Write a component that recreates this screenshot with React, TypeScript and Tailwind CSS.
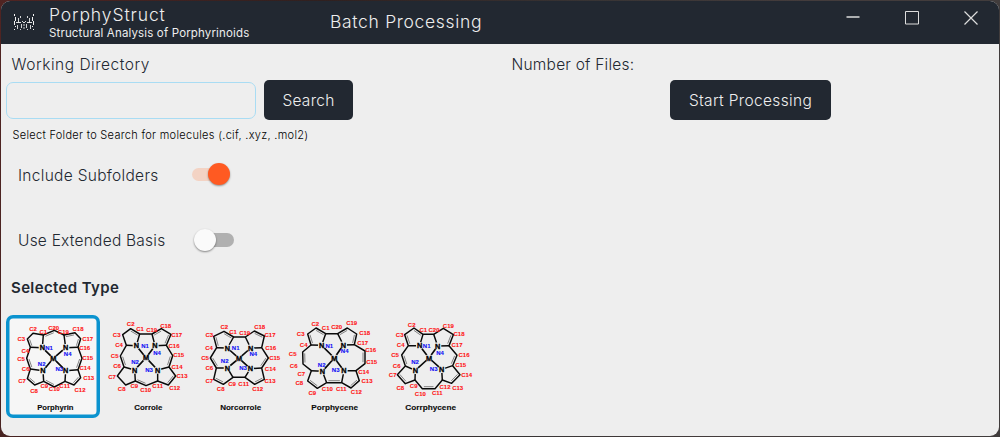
import { useState } from "react";

type Point = [number, number];
// Ring position, atom x, atom y, label x, label y
type Carbon = [number, number, number, number, number];

interface Molecule {
  name: string;
  viewBox: string;
  titleX: number;
  titleWidth: number;
  carbons: Carbon[];
  metal: Point;
  nitrogens: Point[];
  nitrogenLabels: Point[];
  pyrroles: Point[];
  doubles: Point[];
}

const molecules: Molecule[] = [
  {
    name: "Porphyrin",
    viewBox: "18 9 282 306",
    titleX: 166,
    titleWidth: 109,
    carbons: [
      [1, 130, 69, 130, 58], [2, 99, 64, 99, 51], [3, 82, 81, 64, 81], [4, 91, 106, 76, 115],
      [5, 80, 139, 63, 139], [6, 91, 171, 77, 171], [7, 82, 200, 66, 205], [8, 104, 219, 102, 235],
      [9, 131, 208, 133, 220], [10, 163, 225, 163, 231], [11, 195, 208, 194, 220], [12, 222, 219, 240, 232],
      [13, 242, 197, 266, 198], [14, 234, 173, 255, 168], [15, 246, 139, 263, 138], [16, 234, 106, 254, 108],
      [17, 242, 80, 263, 79], [18, 225, 62, 234, 49], [19, 192, 69, 190, 58], [20, 163, 55, 161, 48],
    ],
    metal: [160, 139],
    nitrogens: [[127, 107], [129, 176], [197, 176], [197, 107]],
    nitrogenLabels: [[147, 106], [125, 156], [178, 171], [203, 124]],
    pyrroles: [[1, 4], [6, 9], [11, 14], [16, 19]],
    doubles: [[1, 20], [3, 4], [5, 6], [7, 8], [9, 10], [12, 13], [14, 15], [17, 16], [18, 19]],
  },
  {
    name: "Corrole",
    viewBox: "0 9 282 306",
    titleX: 145,
    titleWidth: 84,
    carbons: [
      [1, 119, 66, 120, 51], [2, 92, 50, 92, 36], [3, 68, 68, 50, 67], [4, 79, 100, 57, 99],
      [5, 61, 132, 44, 132], [6, 72, 165, 51, 162], [7, 52, 192, 36, 195], [8, 77, 219, 65, 231],
      [9, 106, 207, 103, 222], [10, 138, 221, 137, 234], [11, 173, 207, 173, 221], [12, 205, 219, 224, 228],
      [13, 227, 192, 246, 191], [14, 207, 165, 231, 165], [15, 218, 131, 236, 128], [16, 199, 100, 222, 101],
      [17, 213, 67, 230, 69], [18, 184, 50, 197, 40], [19, 156, 66, 155, 52],
    ],
    metal: [138, 137],
    nitrogens: [[109, 101], [104, 174], [173, 174], [165, 101]],
    nitrogenLabels: [[135, 101], [105, 150], [147, 174], [171, 123]],
    pyrroles: [[1, 4], [6, 9], [11, 14], [16, 19]],
    doubles: [[1, 2], [5, 6], [9, 10], [12, 13], [14, 15], [16, 17], [18, 19]],
  },
  {
    name: "Norcorrole",
    viewBox: "12 9 282 306",
    titleX: 152,
    titleWidth: 123,
    carbons: [
      [1, 131, 75, 129, 60], [2, 102, 58, 103, 45], [3, 71, 73, 58, 69], [4, 80, 107, 57, 108],
      [5, 61, 138, 45, 138], [6, 79, 168, 58, 168], [7, 71, 202, 58, 207], [8, 100, 217, 92, 231],
      [9, 129, 196, 126, 215], [11, 165, 196, 161, 215], [12, 194, 217, 203, 231], [13, 223, 202, 240, 207],
      [14, 215, 168, 241, 171], [15, 235, 138, 254, 138], [16, 215, 107, 242, 108], [17, 223, 72, 240, 69],
      [18, 193, 57, 209, 45], [19, 166, 75, 164, 61],
    ],
    metal: [147, 139],
    nitrogens: [[112, 108], [112, 168], [181, 170], [182, 108]],
    nitrogenLabels: [[137, 108], [104, 147], [159, 168], [190, 125]],
    pyrroles: [[1, 4], [6, 9], [11, 14], [16, 19]],
    doubles: [[1, 2], [3, 4], [5, 6], [7, 8], [12, 13], [14, 15], [17, 18]],
  },
  {
    name: "Porphycene",
    viewBox: "9 9 282 306",
    titleX: 149,
    titleWidth: 140,
    carbons: [
      [1, 122, 65, 122, 46], [2, 93, 48, 91, 36], [3, 68, 66, 47, 66], [4, 78, 99, 56, 99],
      [5, 53, 120, 23, 124], [6, 54, 156, 26, 160], [7, 79, 176, 49, 184], [8, 68, 207, 43, 213],
      [9, 97, 229, 82, 243], [10, 125, 212, 127, 230], [11, 170, 212, 169, 229], [12, 198, 228, 214, 240],
      [13, 223, 206, 246, 205], [14, 213, 176, 236, 178], [15, 240, 155, 260, 148], [16, 240, 117, 257, 114],
      [17, 208, 98, 233, 91], [18, 215, 66, 239, 63], [19, 187, 48, 200, 33], [20, 158, 65, 155, 45],
    ],
    metal: [148, 138],
    nitrogens: [[110, 100], [112, 178], [177, 176], [175, 99]],
    nitrogenLabels: [[133, 100], [110, 159], [152, 174], [179, 117]],
    pyrroles: [[1, 4], [7, 10], [11, 14], [17, 20]],
    doubles: [[1, 2], [3, 4], [5, 6], [8, 9], [10, 11], [12, 13], [15, 16], [17, 18], [19, 20]],
  },
  {
    name: "Corrphycene",
    viewBox: "6 9 282 306",
    titleX: 152,
    titleWidth: 152,
    carbons: [
      [1, 129, 67, 130, 52], [2, 102, 48, 95, 37], [3, 74, 68, 59, 67], [4, 85, 101, 62, 99],
      [5, 65, 129, 45, 127], [6, 76, 162, 50, 160], [7, 52, 188, 38, 189], [8, 76, 215, 61, 228],
      [9, 105, 204, 101, 222], [10, 127, 230, 121, 246], [11, 165, 230, 172, 243], [12, 187, 204, 195, 223],
      [13, 215, 214, 233, 228], [14, 240, 188, 260, 189], [15, 218, 161, 242, 159], [16, 231, 130, 252, 127],
      [17, 207, 101, 231, 99], [18, 220, 68, 237, 64], [19, 190, 49, 205, 40], [20, 161, 67, 162, 52],
    ],
    metal: [147, 138],
    nitrogens: [[119, 101], [106, 175], [185, 172], [173, 102]],
    nitrogenLabels: [[140, 101], [105, 150], [161, 171], [180, 122]],
    pyrroles: [[1, 4], [6, 9], [12, 15], [17, 20]],
    doubles: [[1, 2], [3, 4], [5, 6], [7, 8], [10, 11], [13, 14], [16, 15], [17, 18]],
  },
];

// The second stroke of a double bond, shifted towards the enclosing ring.
function innerLine(a: Point, b: Point, toward: Point) {
  const dx = b[0] - a[0];
  const dy = b[1] - a[1];
  const len = Math.hypot(dx, dy);
  let nx = -dy / len;
  let ny = dx / len;
  const mx = (a[0] + b[0]) / 2;
  const my = (a[1] + b[1]) / 2;
  if (nx * (toward[0] - mx) + ny * (toward[1] - my) < 0) {
    nx = -nx;
    ny = -ny;
  }
  const s = 6;
  const t = 0.12;
  return `M${a[0] + dx * t + nx * s} ${a[1] + dy * t + ny * s}L${b[0] - dx * t + nx * s} ${b[1] - dy * t + ny * s}`;
}

function MoleculeDrawing({ molecule, halo }: { molecule: Molecule; halo: string }) {
  const atoms = new Map<number, Point>(molecule.carbons.map((c) => [c[0], [c[1], c[2]]]));
  const ring = `M${molecule.carbons.map((c) => `${c[1]} ${c[2]}`).join("L")}Z`;
  const pyrroles = molecule.pyrroles
    .map(([a, b], i) => `M${atoms.get(a)!.join(" ")}L${molecule.nitrogens[i].join(" ")}L${atoms.get(b)!.join(" ")}`)
    .join("");
  const doubles = molecule.doubles
    .map(([a, b]) => {
      const owner = molecule.pyrroles.findIndex(([s, e]) => a >= s && a <= e && b >= s && b <= e);
      const toward = owner >= 0 ? molecule.nitrogens[owner] : molecule.metal;
      return innerLine(atoms.get(a)!, atoms.get(b)!, toward);
    })
    .join("");
  const spokes = molecule.nitrogens.map((n) => `M${n.join(" ")}L${molecule.metal.join(" ")}`).join("");

  return (
    <svg
      viewBox={molecule.viewBox}
      className="block h-[102px] w-[94px] overflow-visible font-['Liberation_Sans',Arial,sans-serif] font-bold"
      textAnchor="middle"
    >
      <path d={doubles} fill="none" stroke="#666" strokeWidth="2.4" />
      <path d={ring} fill="none" stroke="#0a0a0a" strokeWidth="4.4" strokeLinejoin="round" />
      <path d={pyrroles} fill="none" stroke="#0a0a0a" strokeWidth="4.4" strokeLinejoin="round" />
      <path d={spokes} fill="none" stroke="#0a0a0a" strokeWidth="5" />
      <g fill={halo}>
        {[...molecule.nitrogens, molecule.metal].map(([x, y], i) => (
          <circle key={i} cx={x} cy={y} r="11" />
        ))}
      </g>
      <g fontSize="22" fill="#000" stroke="#000" strokeWidth="1">
        {molecule.nitrogens.map(([x, y], i) => (
          <text key={i} x={x} y={y + 8}>N</text>
        ))}
        <text x={molecule.metal[0]} y={molecule.metal[1] + 8}>M</text>
      </g>
      <g fontSize="18" fill="#1010f5" stroke="#1010f5" strokeWidth="0.3">
        {molecule.nitrogenLabels.map(([x, y], i) => (
          <text key={i} x={x} y={y + 6.5}>{`N${i + 1}`}</text>
        ))}
      </g>
      <g fontSize="18" fill="#ff1414" stroke="#ff1414" strokeWidth="0.3">
        {molecule.carbons.map(([n, , , x, y]) => (
          <text key={n} x={x} y={y + 6.5}>{`C${n}`}</text>
        ))}
      </g>
      <text
        x={molecule.titleX}
        y="293"
        fontSize="21"
        fill="#0a0a0a"
        stroke="#0a0a0a"
        strokeWidth="0.3"
        textLength={molecule.titleWidth}
        lengthAdjust="spacingAndGlyphs"
      >
        {molecule.name}
      </text>
    </svg>
  );
}

function Logo() {
  return (
    <svg viewBox="0 0 22 20" className="block h-5 w-[22px]" fill="none" stroke="#f2f2f2">
      <path
        d="M2.500 2v2M3.500 5v4M2.500 9v4M3.500 14v1M2 17.500h1M21.500 2v2M20.500 5v4M21.500 9v4M20.500 14v1M21 17.500h1"
        strokeWidth="1"
      />
      <path
        d="M8.500 4v2M15.500 4v2M6.500 6v5M17.500 6v5M9.500 12v4M14.500 12v4M8.500 17v1M15.500 17v1M5.500 13v4M18.500 13v4"
        strokeWidth="1"
        opacity=".85"
      />
      <path d="M4 10.500h5M10 9.500h1M13 9.500h1M15 10.500h5M11 10.500h2" strokeWidth="1" opacity=".9" />
      <path d="M12 12v5" strokeWidth="1" strokeDasharray="2 1" opacity=".8" />
    </svg>
  );
}

function Toggle({ on, onChange }: { on: boolean; onChange: () => void }) {
  return (
    <button type="button" role="switch" aria-checked={on} onClick={onChange} className="flex h-6 w-[42px] items-center">
      <span
        className={
          on
            ? "flex h-[13px] w-[34px] items-center justify-end rounded-full bg-[#f3d3c4]"
            : "ml-1 flex h-[14px] w-[38px] items-center rounded-full bg-[#b0b0b0]"
        }
      >
        <span
          className={
            on
              ? "-mr-[4px] size-[22px] shrink-0 rounded-full bg-[#ff5a22] shadow-[0_1px_2px_rgba(0,0,0,0.4)]"
              : "-ml-[2px] size-[22px] shrink-0 rounded-full bg-[#fafafa] shadow-[0_1px_2px_rgba(0,0,0,0.45)]"
          }
        />
      </span>
    </button>
  );
}

export default function App() {
  const [subfolders, setSubfolders] = useState(true);
  const [extended, setExtended] = useState(false);
  const [selected, setSelected] = useState("Porphyrin");

  return (
    <div className="h-[437px] w-[1000px] overflow-hidden bg-[linear-gradient(100deg,#502422,#30201f_30%,#383434_55%,#443c3c_75%,#403c3c)] p-px font-['Inter',sans-serif] font-light text-[#222831]">
      <div className="flex h-[435px] flex-col overflow-hidden rounded-[9px] bg-[#eeeeee]">
        <header className="flex h-[43px] shrink-0 bg-[#222831] text-[#eeeeee]">
          <div className="w-[48px] pt-[11px] pl-[11px]">
            <Logo />
          </div>
          <div className="w-[281px] whitespace-nowrap">
            <div className="pt-[3px] text-[17.5px] leading-[21px] tracking-[0.9px]">PorphyStruct</div>
            <div className="pt-px text-[11.5px] leading-[15px] font-normal tracking-[0.15px]">Structural Analysis of Porphyrinoids</div>
          </div>
          <div className="pt-[9px] text-[17.5px] leading-6 tracking-[0.68px]">Batch Processing</div>
          <div className="ml-auto flex gap-[45px] pt-[10px] pr-[21px]">
            <svg className="size-[14px]" viewBox="0 0 14 14" stroke="#ddd" fill="none"><path d="M.5 6h13" strokeWidth="1.600" /></svg>
            <svg className="size-[14px]" viewBox="0 0 14 14" stroke="#ddd" fill="none"><path d="M.5.500h13v12.500H.5z" /></svg>
            <svg className="size-[14px]" viewBox="0 0 14 14" stroke="#ddd" fill="none"><path d="M.5.500l13 13M13.500.500l-13 13" strokeWidth="1.200" /></svg>
          </div>
        </header>

        <div className="flex">
          <section className="w-[500px]">
            <div className="pt-[10px] pl-[10.5px] text-[15.5px] leading-[22px] tracking-[0.52px]">Working Directory</div>
            <div className="mt-1 flex items-start pl-[5px]">
              <input
                aria-label="Working Directory"
                className="mt-[2px] h-[37px] w-[250px] rounded-[7px] border border-[#a9dcf3] bg-transparent px-2 outline-none"
              />
              <button type="button" className="ml-2 h-10 w-[89px] rounded-[5px] bg-[#222831] pt-[2px] text-[15.5px] tracking-[0.28px] text-[#eeeeee]">
                Search
              </button>
            </div>
            <div className="pt-[7px] pl-[11.5px] text-[11px] leading-4 tracking-[0.3px] text-black">
              Select Folder to Search for molecules (.cif, .xyz, .mol2)
            </div>
            <div className="mt-[19px] flex h-6 items-center pl-[17px]">
              <div className="w-[174px] pt-[3px] text-[15.5px] tracking-[0.3px]">Include Subfolders</div>
              <Toggle on={subfolders} onChange={() => setSubfolders(!subfolders)} />
            </div>
            <div className="mt-[42px] flex h-6 items-center pl-[17px]">
              <div className="w-[174px] pt-[2px] text-[15.5px] tracking-[0.23px]">Use Extended Basis</div>
              <Toggle on={extended} onChange={() => setExtended(!extended)} />
            </div>
          </section>
          <section className="w-[498px]">
            <div className="pt-[10px] pl-[10.5px] text-[15.5px] leading-[22px] tracking-[0.22px]">Number of Files:</div>
            <button type="button" className="mt-1 ml-[169px] h-10 w-[161px] rounded-[5px] bg-[#222831] pt-[2px] text-[15.5px] tracking-[0.34px] text-[#eeeeee]">
              Start Processing
            </button>
          </section>
        </div>

        <h2 className="mt-[25px] pl-[10px] text-[15px] leading-[22px] font-semibold tracking-[0.37px]">Selected Type</h2>
        <div className="mt-[16px] flex pl-[5px]">
          {molecules.map((m) => {
            const active = selected === m.name;
            return (
              <button
                key={m.name}
                type="button"
                onClick={() => setSelected(m.name)}
                className={
                  active
                    ? "h-[103px] w-[94px] rounded-[7px] bg-[#f6f6f6] pb-px shadow-[inset_0_0_0_3.500px_#0b93cf]"
                    : "h-[103px] w-[94px] rounded-[7px] pb-px"
                }
              >
                <MoleculeDrawing molecule={m} halo={active ? "#f6f6f6" : "#eeeeee"} />
              </button>
            );
          })}
        </div>
      </div>
    </div>
  );
}
